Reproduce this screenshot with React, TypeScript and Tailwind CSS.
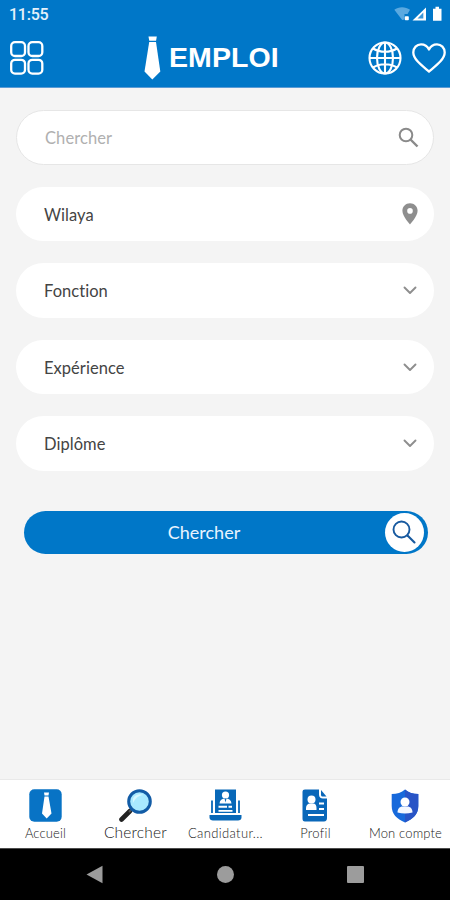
import type { ReactNode } from "react";

function StatusBar() {
  return (
    <div className="flex h-7 items-center justify-between pl-[9px] pr-[7px]">
      <span className="pt-0.5 font-[Roboto,sans-serif] text-[16px] font-medium leading-none tracking-[-0.250px] text-white/90">
        11:55
      </span>
      <svg width="50" height="16" viewBox="0 0 50 16">
        <path d="M1.3 3.8C5.5.4 12.500.4 17 3.800L14.500 8H11.500V13.500L9.200 14Z" fill="#5aa9e0" />
        <rect x="11.800" y="10.300" width="4" height="4" rx="0.800" fill="#fff" />
        <path d="M33 1.500V14.500H19.500Z" fill="#fff" />
        <path d="M30.300 6.500V12.500H24.500Z" fill="#3d98d8" />
        <path d="M42.500 0.700h3.500v2h2.500v12h-8.500v-12h2.500Z" fill="#fff" />
      </svg>
    </div>
  );
}

function Header() {
  return (
    <header className="h-[88px] shrink-0 border-b border-[#5b9bd5] bg-[#0077c8]">
      <StatusBar />
      <div className="flex h-[59px] items-center pl-[10px] pr-[4px]">
        <svg width="34" height="34" viewBox="0 0 34 34" fill="none" stroke="#fff" strokeWidth="2.300">
          <rect x="1.200" y="1.200" width="13.800" height="13.800" rx="3.800" />
          <rect x="18.500" y="1.200" width="13.800" height="13.800" rx="3.800" />
          <rect x="1.200" y="18.800" width="13.800" height="13.800" rx="3.800" />
          <rect x="18.500" y="18.800" width="13.800" height="13.800" rx="3.800" />
        </svg>
        <div className="ml-[100px] flex items-center">
          <svg width="17" height="44" viewBox="0 0 17 44" fill="#fff">
            <path d="M4.500 0.500h8.300l-.7 4.300H5.300Z" />
            <path d="M5.200 6h6.800l4.300 29.500-8 8-7.800-8Z" />
          </svg>
          <span className="ml-[8px] font-['Liberation_Sans',sans-serif] text-[28.500px] font-bold leading-none tracking-[0.100px] text-white">
            EMPLOI
          </span>
        </div>
        <div className="ml-auto flex w-[78px] items-center justify-between">
          <svg width="34" height="34" viewBox="0 0 34 34" fill="none" stroke="#fff" strokeWidth="2.100">
            <circle cx="17" cy="17" r="15.500" />
            <ellipse cx="17" cy="17" rx="8" ry="15.500" />
            <path d="M17 1.500v31M1.500 17h31M5 7.500c7 4.300 17 4.300 24 0M5 26.500c7-4.300 17-4.300 24 0" />
          </svg>
          <svg width="34" height="30" viewBox="0 0 34 30" fill="none" stroke="#fff" strokeWidth="2.300" strokeLinejoin="round">
            <path d="M17 28.500C10.500 23 1.300 16.500 1.300 9.500 1.300 4.800 4.800 1.300 9 1.300c3.500 0 6.500 2 8 5.200 1.500-3.200 4.500-5.200 8-5.200 4.200 0 7.700 3.500 7.700 8.200 0 7-9.200 13.500-15.700 19Z" />
          </svg>
        </div>
      </div>
    </header>
  );
}

function Chevron() {
  return (
    <svg width="14" height="10" viewBox="0 0 14 10" fill="none" stroke="#8e8e8e" strokeWidth="1.900" strokeLinecap="round" strokeLinejoin="round">
      <path d="M1.500 2.500 7 8 12.500 2.500" />
    </svg>
  );
}

function Pin() {
  return (
    <svg width="16" height="22" viewBox="0 0 16 22" fill="#8e8e8e" fillRule="evenodd">
      <path d="M8 .3C3.700.3.400 3.600.400 7.800.400 13.400 8 21.500 8 21.500s7.600-8.100 7.600-13.700C15.600 3.600 12.300.3 8 .3Zm0 4.800a2.800 2.800 0 1 1 0 5.600 2.800 2.800 0 0 1 0-5.600Z" />
    </svg>
  );
}

function SelectField({ label, icon, iconClass }: { label: string; icon: ReactNode; iconClass: string }) {
  return (
    <div className="flex h-[54.500px] items-center justify-between rounded-full bg-white pl-7">
      <span className="pt-[3px] text-[16.500px] tracking-[0.040px] text-[#444444] [font-variant-ligatures:none]">{label}</span>
      <span className={iconClass}>{icon}</span>
    </div>
  );
}

function SearchForm() {
  return (
    <main className="flex-1 bg-[#f4f4f4] px-4 pt-[22px]">
      <div className="flex flex-col gap-[22px]">
        <div className="flex h-[54.500px] items-center justify-between rounded-full border border-[#e6e6e6] bg-white pl-7 pr-[14px]">
          <span className="pt-[3px] text-[16.500px] tracking-[0.100px] text-[#b0b0b0]">Chercher</span>
          <svg width="21" height="21" viewBox="0 0 21 21" fill="none" stroke="#8a8a8a" strokeWidth="2">
            <circle cx="8" cy="8" r="6.300" />
            <path d="m12.500 12.500 7 7" strokeWidth="2.400" />
          </svg>
        </div>
        <SelectField label="Wilaya" icon={<Pin />} iconClass="mr-4" />
        <SelectField label="Fonction" icon={<Chevron />} iconClass="mr-[17px]" />
        <SelectField label="Expérience" icon={<Chevron />} iconClass="mr-[17px]" />
        <SelectField label="Diplôme" icon={<Chevron />} iconClass="mr-[17px]" />
      </div>
      <button className="ml-[7.500px] mt-10 flex h-[43px] w-[404px] items-center rounded-full bg-[#0077c8] pr-[4px]">
        <span className="flex-1 pt-px text-center text-[18px] text-[#e9f4ff]">Chercher</span>
        <span className="flex size-[39px] items-center justify-center rounded-full bg-white">
          <svg width="24" height="24" viewBox="0 0 24 24" fill="none" stroke="#17599f" strokeWidth="1.900" strokeLinecap="round">
            <circle cx="9.500" cy="9.500" r="8" />
            <path d="m15.500 15.500 7 7" strokeWidth="2.100" />
          </svg>
        </span>
      </button>
    </main>
  );
}

function TieIcon() {
  return (
    <svg width="33" height="33" viewBox="0 0 33 33">
      <rect x="0.300" y="0.300" width="32.400" height="32.400" rx="5" fill="#0873c5" />
      <path d="M15 3.500h5l-.5 3h-4ZM15.500 7.500h4l3 17-4.800 5-4.700-5Z" fill="#fff" />
    </svg>
  );
}

function MagnifierIcon() {
  return (
    <svg width="33" height="33" viewBox="0 0 33 33">
      <path d="m11 22-8.500 8.500" stroke="#222" strokeWidth="4.600" strokeLinecap="round" />
      <path d="m13.500 19.500-3.500 3.500" stroke="#555" strokeWidth="2" />
      <circle cx="20.500" cy="12.500" r="10.800" fill="#a9eaff" stroke="#125ca6" strokeWidth="3" />
      <path d="M14 9.500c2-4 7-5 10.500-3.500-5 .5-8 3-10.500 8Z" fill="#d6f7ff" />
    </svg>
  );
}

function ApplicationsIcon() {
  return (
    <svg width="33" height="33" viewBox="0 0 33 33" fill="#0868b8">
      <path d="M6 .5h21V24H6ZM.500 26h32v2.500c0 2-1.500 3-3.500 3H4c-2 0-3.500-1-3.500-3Z" />
      <path d="M3 11.500V24M30 11.500V24" stroke="#0868b8" strokeWidth="1.800" />
      <circle cx="16.500" cy="6" r="3.600" fill="#fff" />
      <path d="M10.500 14.500c.3-3.300 2.300-5 6-5s5.700 1.700 6 5ZM9.500 16.800h8.500v2H9.500Zm10 0h3.500v2h-3.500ZM9.500 21h14v1.800h-14Z" fill="#fff" />
      <path d="m15.500 9.500 1 4 1-4" fill="#0868b8" />
    </svg>
  );
}

function ProfileIcon() {
  return (
    <svg width="26" height="33" viewBox="0 0 26 33" fill="#0967b9">
      <path d="M3 .5h14v5c0 2.500 1.500 4 4 4h4V29c0 2-1 3.500-3 3.500H3c-1.800 0-2.500-1-2.500-3V3C.500 1.300 1.400.5 3 .5Z" />
      <path d="m19 1 5.500 6.500h-4c-1 0-1.500-.6-1.500-1.500Z" />
      <circle cx="9.500" cy="10.500" r="4" fill="#fff" />
      <path d="M4 21v-2c0-3 2-4.500 4-4.500h3c2.500 0 3.500 2 3.500 4.500v2Z" fill="#fff" />
      <path d="M17 14.500h5M17 20h5M6 26h16" stroke="#fff" strokeWidth="1.900" />
    </svg>
  );
}

function AccountIcon() {
  return (
    <svg width="28" height="34" viewBox="0 0 28 34">
      <path d="M14 .5C10.500 3.500 6 5 .700 5V17c0 8 5 13 13.300 16.500C22.300 30 27.300 25 27.300 17V5C22 5 17.500 3.500 14 .5Z" fill="#1769db" />
      <path d="M14 .5V33.500C22.300 30 27.300 25 27.300 17V5C22 5 17.500 3.500 14 .5Z" fill="#2854c6" />
      <circle cx="14" cy="13" r="4.500" fill="#fff" />
      <path d="M6.500 23.500c0-4 2.500-6 5-6h5c2.500 0 5 2 5 6Q14 25.500 6.500 23.500Z" fill="#f3f7ff" />
    </svg>
  );
}

function NavItem({ icon, label, labelClass }: { icon: ReactNode; label: string; labelClass: string }) {
  return (
    <div className="flex flex-col items-center pt-[9px]">
      <div className="flex h-[33px] items-center">{icon}</div>
      <span className={`flex items-center whitespace-nowrap pl-px leading-none ${labelClass}`}>{label}</span>
    </div>
  );
}

function BottomNav() {
  return (
    <nav className="grid h-[69px] shrink-0 grid-cols-5 border-t border-[#e9e9e9] bg-white">
      <NavItem icon={<TieIcon />} label="Accueil" labelClass="h-[23px] text-[13px] font-light tracking-[0.150px] text-[#202020]" />
      <NavItem icon={<MagnifierIcon />} label="Chercher" labelClass="h-[21px] text-[15.500px] font-light tracking-[0.200px] text-[#202020]" />
      <NavItem icon={<ApplicationsIcon />} label="Candidatur..." labelClass="h-[23px] text-[13px] font-light tracking-[0.350px] text-[#202020]" />
      <NavItem icon={<ProfileIcon />} label="Profil" labelClass="h-[23px] text-[13px] font-light tracking-[0.300px] text-[#202020]" />
      <NavItem icon={<AccountIcon />} label="Mon compte" labelClass="h-[23px] text-[13px] font-light tracking-[0.150px] text-[#202020]" />
    </nav>
  );
}

function SystemBar() {
  return (
    <div className="flex h-[52px] shrink-0 items-center justify-between border-t border-[#4c4c4c] bg-black pl-[86px] pr-[86px]">
      <svg width="17" height="19" viewBox="0 0 17 19" fill="#9c9c9c">
        <path d="M16.500.8v17.400L.500 9.500Z" />
      </svg>
      <span className="size-[17px] rounded-full bg-[#9c9c9c]" />
      <span className="size-[17px] rounded-[1px] bg-[#9c9c9c]" />
    </div>
  );
}

export default function App() {
  return (
    <div className="flex h-[900px] w-[450px] flex-col overflow-hidden bg-[#f4f4f4] font-[Lato,sans-serif]">
      <Header />
      <SearchForm />
      <BottomNav />
      <SystemBar />
    </div>
  );
}
